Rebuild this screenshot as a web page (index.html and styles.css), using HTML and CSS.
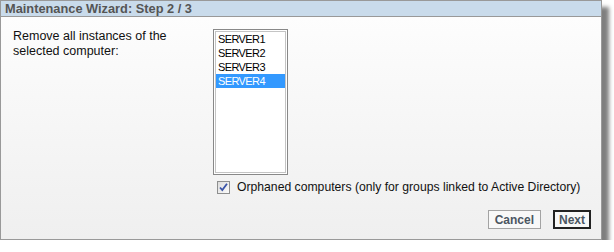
FILE: index.html
```html
<!DOCTYPE html>
<html>
<head>
    <title>Maintenance Wizard</title>
    <link rel="stylesheet" href="styles.css">
</head>
<body>
    <div class="wizard">
        <div class="wizard-title">Maintenance Wizard: Step 2 / 3</div>
        <div class="wizard-body">
            <div class="row">
                <div class="prompt">Remove all instances of the selected computer:</div>
                <div class="listbox">
                    <div class="listbox-inner">
                        <div class="item">SERVER1</div>
                        <div class="item">SERVER2</div>
                        <div class="item">SERVER3</div>
                        <div class="item selected">SERVER4</div>
                    </div>
                </div>
            </div>
            <label class="option">
                <span class="check">
                    <svg width="11" height="11" viewBox="0 0 11 11">
                        <path d="M2 5.5 L4.3 8 L9 1.8" fill="none" stroke="#3a54a8" stroke-width="1.8"/>
                    </svg>
                </span>
                Orphaned computers (only for groups linked to Active Directory)
            </label>
            <div class="actions">
                <button class="btn">Cancel</button>
                <button class="btn primary">Next</button>
            </div>
        </div>
    </div>
</body>
</html>
```

FILE: styles.css
```css
body {
    margin: 0;
    background: #fff;
    font-family: "Liberation Sans", Arial, sans-serif;
}
.wizard {
    box-sizing: border-box;
    width: 602px;
    height: 240px;
    border: 1px solid #999;
    box-shadow: 7px 7px 4px rgba(0, 0, 0, 0.5);
    display: flex;
    flex-direction: column;
}
.wizard-title {
    height: 15px;
    line-height: 15px;
    padding-left: 4px;
    background: #c9dbeb;
    border-bottom: 1px solid #999;
    color: #555;
    font-size: 12.8px;
    font-weight: bold;
}
.wizard-body {
    flex: 1;
    padding: 12px 10px 0 12px;
    background: linear-gradient(#fdfdfd, #efefef);
}
.row {
    display: flex;
}
.prompt {
    width: 170px;
    margin-right: 30px;
    font-size: 12.5px;
    line-height: 15px;
    color: #111;
}
.listbox {
    box-sizing: border-box;
    width: 75px;
    height: 146px;
    border: 1px solid #888;
    padding: 1px;
    background: #fff;
}
.listbox-inner {
    height: 100%;
    box-sizing: border-box;
    border: 1px solid #c4c4c4;
}
.item {
    height: 14px;
    line-height: 14px;
    padding-left: 2px;
    font-size: 11px;
    letter-spacing: -0.6px;
    color: #000;
}
.item.selected {
    background: #3399ff;
    color: #fff;
}
.option {
    display: flex;
    align-items: center;
    margin: 5px 0 0 204px;
    font-size: 12.2px;
    color: #111;
}
.check {
    box-sizing: border-box;
    width: 13px;
    height: 13px;
    margin-right: 7px;
    border: 1px solid #8e8f8f;
    background: linear-gradient(135deg, #dcdcdc, #fbfbfb);
    display: flex;
    align-items: center;
    justify-content: center;
}
.actions {
    display: flex;
    justify-content: flex-end;
    gap: 12px;
    margin-top: 16px;
}
.btn {
    height: 19px;
    padding: 0 6px;
    border: 1px solid #a3a3a3;
    background: #f8f8f8;
    color: #4b5662;
    font-family: "Liberation Sans", Arial, sans-serif;
    font-size: 12px;
    font-weight: bold;
}
.btn.primary {
    border: 2px solid #222;
    padding: 0 4px;
}
```
